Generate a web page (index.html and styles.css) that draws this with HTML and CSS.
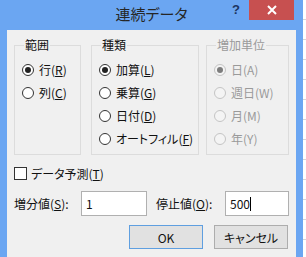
FILE: index.html
```html
<!DOCTYPE html>
<html lang="ja">
<head>
    <meta charset="UTF-8">
    <title>連続データ</title>
    <link rel="stylesheet" href="styles.css">
</head>
<body>
    <div class="window">
        <div class="titlebar">
            <span></span>
            <span class="title">連続データ</span>
            <div class="controls">
                <span class="help">?</span>
                <span class="close">
                    <svg width="10" height="10" viewBox="0 0 10 10"><path d="M1 1 L9 9 M9 1 L1 9" stroke="#fff" stroke-width="2"/></svg>
                </span>
            </div>
        </div>
        <div class="client">
            <div class="groups">
                <fieldset class="group g-range">
                    <legend>範囲</legend>
                    <label class="opt"><input type="radio" name="range" checked>行(<u>R</u>)</label>
                    <label class="opt"><input type="radio" name="range">列(<u>C</u>)</label>
                </fieldset>
                <fieldset class="group g-type">
                    <legend>種類</legend>
                    <label class="opt"><input type="radio" name="type" checked>加算(<u>L</u>)</label>
                    <label class="opt"><input type="radio" name="type">乗算(<u>G</u>)</label>
                    <label class="opt"><input type="radio" name="type">日付(<u>D</u>)</label>
                    <label class="opt"><input type="radio" name="type">オートフィル(<u>F</u>)</label>
                </fieldset>
                <fieldset class="group g-unit disabled">
                    <legend>増加単位</legend>
                    <label class="opt"><input type="radio" name="unit" checked disabled>日(A)</label>
                    <label class="opt"><input type="radio" name="unit" disabled>週日(W)</label>
                    <label class="opt"><input type="radio" name="unit" disabled>月(M)</label>
                    <label class="opt"><input type="radio" name="unit" disabled>年(Y)</label>
                </fieldset>
            </div>

            <label class="check"><input type="checkbox">データ予測(<u>T</u>)</label>

            <div class="values">
                <span class="lbl lbl-step">増分値(<u>S</u>):</span>
                <input type="text" class="field f-step" value="1">
                <span class="lbl lbl-stop">停止値(<u>O</u>):</span>
                <div class="field f-stop">500<span class="caret"></span></div>
            </div>

            <div class="buttons">
                <button class="btn default">OK</button>
                <button class="btn">キャンセル</button>
            </div>
        </div>
    </div>
</body>
</html>
```

FILE: styles.css
```css
body {
    margin: 0;
    font-family: "Noto Sans CJK JP", "Noto Sans", sans-serif;
    font-size: 12px;
    font-feature-settings: "palt";
    color: #111;
    background: repeating-linear-gradient(to bottom, #fff 0 19px, #d6d6d6 19px 20px);
}
.window {
    width: 303px;
    height: 257px;
    background: #6ba6f2;
    display: flex;
    flex-direction: column;
}
.titlebar {
    height: 30px;
    display: grid;
    grid-template-columns: 1fr auto 1fr;
}
.title {
    font-size: 15px;
    line-height: 27px;
    color: #262626;
}
.controls {
    display: flex;
    justify-content: flex-end;
    align-items: flex-start;
    margin-right: 9px;
}
.help {
    width: 26px;
    height: 20px;
    line-height: 19px;
    text-align: center;
    font-family: "Liberation Sans", sans-serif;
    font-weight: bold;
    font-size: 13px;
    color: #1d3560;
}
.close {
    width: 45px;
    height: 20px;
    background: #c75050;
    display: flex;
    align-items: center;
    justify-content: center;
}
.client {
    flex: 1;
    margin: 0 7px;
    background: #f0f0f0;
    padding: 7px 7px 0 7px;
}
.groups {
    display: flex;
    height: 118px;
}
.group {
    margin: 0;
    padding: 5px 0 0 7px;
    border: 1px solid #dcdcdc;
    display: flex;
    flex-direction: column;
}
.group legend {
    padding: 0 1px;
    margin-left: 2px;
    line-height: 16px;
}
.g-range { width: 67px; box-sizing: border-box; }
.g-type { width: 108px; box-sizing: border-box; margin-left: 10px; }
.g-unit { width: 83px; box-sizing: border-box; margin-left: 7px; }
.disabled, .disabled legend { color: #9a9a9a; }
.opt {
    height: 23px;
    display: flex;
    align-items: center;
    white-space: nowrap;
}
.opt input {
    appearance: none;
    width: 12px;
    height: 12px;
    margin: 0 5px 0 0;
    border: 1px solid #333;
    border-radius: 50%;
    background: #fff;
    display: grid;
    place-content: center;
}
.opt input:checked::before {
    content: "";
    width: 6px;
    height: 6px;
    border-radius: 50%;
    background: #222;
}
.opt input:disabled {
    border-color: #c4c4c4;
    background: #f4f4f4;
}
.opt input:disabled:checked::before { background: #7d7d7d; }
.check {
    display: flex;
    align-items: center;
    height: 13px;
    margin-top: 12px;
}
.check input {
    appearance: none;
    width: 13px;
    height: 13px;
    margin: 0 4px 0 0;
    border: 1px solid #333;
    background: #fff;
}
.values {
    display: flex;
    align-items: center;
    margin-top: 11px;
    height: 25px;
}
.lbl-step { width: 67px; }
.lbl-stop { width: 69px; margin-left: 9px; }
.field {
    box-sizing: border-box;
    height: 25px;
    border: 1px solid #b0b0b0;
    background: #fff;
    font: inherit;
    color: #111;
    padding: 0 4px;
    line-height: 23px;
    margin: 0;
}
.f-step { width: 66px; }
.f-stop { width: 64px; display: flex; align-items: center; }
.caret {
    display: inline-block;
    width: 1px;
    height: 14px;
    background: #000;
}
.buttons {
    display: flex;
    justify-content: flex-end;
    gap: 11px;
    margin-top: 9px;
    padding-right: 1px;
}
.btn {
    width: 74px;
    height: 24px;
    border: 1px solid #adadad;
    background: #e1e1e1;
    font: inherit;
    color: #111;
    padding: 0;
}
.btn.default { border-color: #5f9fe0; }
```
